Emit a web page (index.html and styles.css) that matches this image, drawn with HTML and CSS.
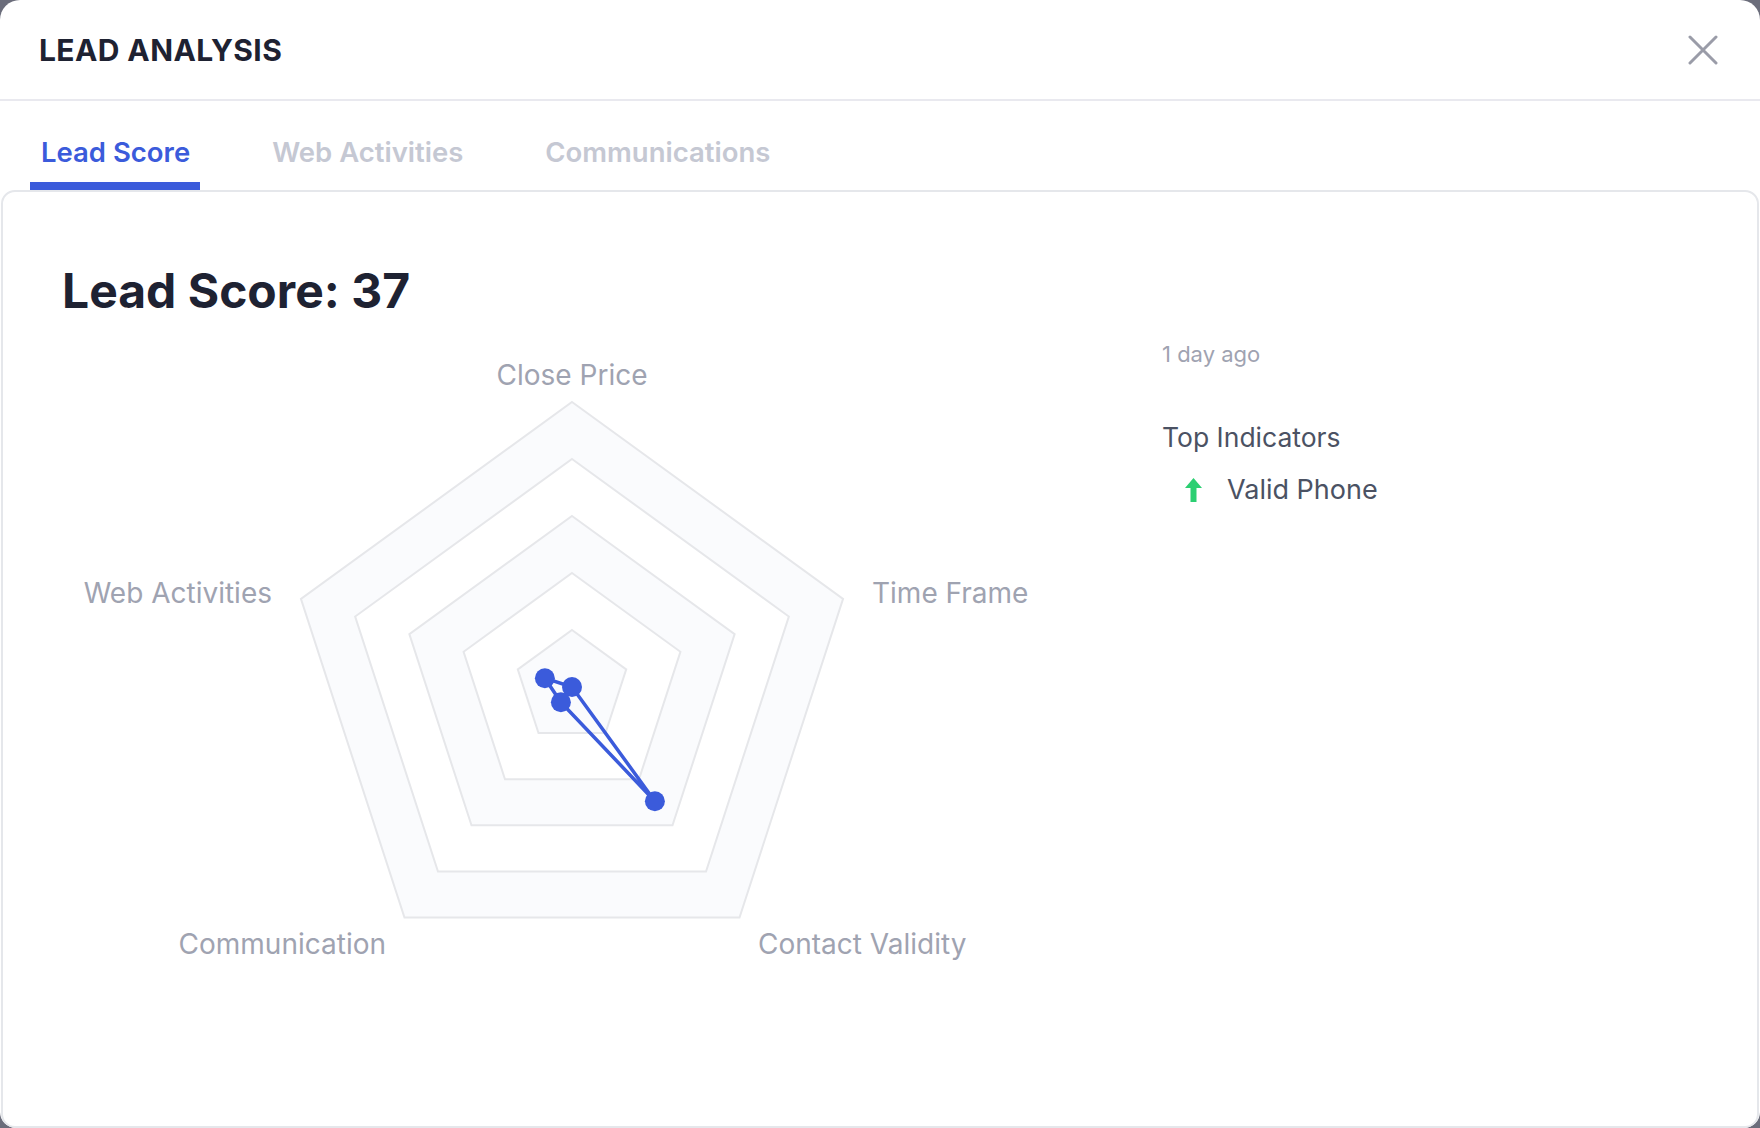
FILE: index.html
```html
<!DOCTYPE html>
<html lang="en">
<head>
  <meta charset="UTF-8" />
  <title>Lead Analysis</title>
  <meta name="viewport" content="width=device-width, initial-scale=1.0" />
  <link rel="stylesheet" href="styles.css">
</head>
<body>
  <div class="modal">
    <header class="modal-header">
      <h1 class="modal-title">LEAD ANALYSIS</h1>
      <button class="close-btn" aria-label="Close">
        <svg width="30" height="30" viewBox="0 0 30 30">
          <path d="M2 2 L28 28 M28 2 L2 28" />
        </svg>
      </button>
    </header>

    <nav class="tabs">
      <a class="tab active">Lead Score</a>
      <a class="tab">Web Activities</a>
      <a class="tab">Communications</a>
    </nav>

    <section class="card">
      <h2 class="score-title">Lead Score: 37</h2>

      <div class="score-body">
        <!-- radar: centre 510,367, radius 285 -->
        <svg class="radar" width="1040" height="660" viewBox="0 0 1040 660">
          <g class="bands">
            <polygon class="band" points="510,82 781.05,278.93 677.52,597.57 342.48,597.57 238.95,278.93" />
            <polygon class="band-gap" points="510,139 726.84,296.54 644.02,551.46 375.98,551.46 293.16,296.54" />
            <polygon class="band" points="510,196 672.63,314.16 610.51,505.34 409.49,505.34 347.37,314.16" />
            <polygon class="band-gap" points="510,253 618.42,331.77 577.01,459.23 442.99,459.23 401.58,331.77" />
            <polygon class="band" points="510,310 564.21,349.39 543.5,413.11 476.5,413.11 455.79,349.39" />
          </g>

          <text class="axis-label" x="510" y="65" text-anchor="middle">Close Price</text>
          <text class="axis-label" x="810" y="283">Time Frame</text>
          <text class="axis-label" x="696" y="634">Contact Validity</text>
          <text class="axis-label" x="324" y="634" text-anchor="end">Communication</text>
          <text class="axis-label" x="210" y="283" text-anchor="end">Web Activities</text>

          <polygon class="series" points="510,367 510,367 592.9,481.2 498.9,382.2 482.9,358.2" />
          <g class="series-dots">
            <circle cx="510" cy="367" r="10" />
            <circle cx="592.9" cy="481.2" r="10" />
            <circle cx="498.9" cy="382.2" r="10" />
            <circle cx="482.9" cy="358.2" r="10" />
          </g>
        </svg>

        <div class="summary">
          <div class="updated">1 day ago</div>
          <div class="indicators-title">Top Indicators</div>
          <ul class="indicators">
            <li>
              <svg class="arrow-up" width="17" height="24" viewBox="0 0 17 24">
                <polygon points="8.5,0 17,10 11.5,10 11.5,24 5.5,24 5.5,10 0,10" />
              </svg>
              Valid Phone
            </li>
          </ul>
        </div>
      </div>
    </section>
  </div>
</body>
</html>
```

FILE: styles.css
```css
html, body {
  margin: 0;
  height: 100%;
}
body {
  background: #6b6d7b;
  font-family: Inter, 'Noto Sans', sans-serif;
  color: #1e2232;
}
.modal {
  height: 100%;
  background: #fff;
  border-radius: 20px 20px 16px 16px;
  overflow: hidden;
  display: flex;
  flex-direction: column;
}
.modal-header {
  height: 99px;
  border-bottom: 2px solid #e9e9ef;
  display: flex;
  align-items: center;
  justify-content: space-between;
  padding: 0 42px 0 39px;
}
.modal-title {
  margin: 0;
  font-size: 30px;
  font-weight: 700;
  letter-spacing: 0.4px;
  color: #1e2232;
}
.close-btn {
  background: none;
  border: 0;
  padding: 0;
  display: flex;
  cursor: pointer;
}
.close-btn path {
  stroke: #9a9ca8;
  stroke-width: 3;
  stroke-linecap: round;
}
.tabs {
  height: 89px;
  display: flex;
  align-items: flex-end;
  gap: 61px;
  padding-left: 30px;
}
.tab {
  padding: 0 10px 13px 11px;
  border-bottom: 8px solid transparent;
  font-size: 27.5px;
  line-height: 34px;
  font-weight: 600;
  color: #c5c8d3;
  cursor: pointer;
}
.tab.active {
  color: #3b5bdb;
  border-bottom-color: #3b5bdb;
}
.card {
  flex: 1;
  margin: 0 1px;
  border: 2px solid #e5e7eb;
  border-radius: 14px;
  padding: 70px 0 0 59px;
}
.score-title {
  margin: 0;
  font-size: 48px;
  line-height: 58px;
  font-weight: 700;
  color: #1e2232;
}
.score-body {
  display: flex;
  gap: 60px;
}
.radar {
  display: block;
  flex-shrink: 0;
}
.band {
  fill: #fafbfd;
  stroke: #e6e7ea;
  stroke-width: 2;
}
.band-gap {
  fill: #fff;
  stroke: #e6e7ea;
  stroke-width: 2;
}
.axis-label {
  font-family: Inter, sans-serif;
  font-size: 28px;
  fill: #9fa3b1;
}
.series {
  fill: none;
  stroke: #3b5bdb;
  stroke-width: 3.5;
  stroke-linejoin: round;
}
.series-dots circle {
  fill: #3b5bdb;
}
.summary {
  padding-top: 18px;
}
.updated {
  font-size: 22px;
  line-height: 32px;
  color: #9fa3b1;
}
.indicators-title {
  margin-top: 49px;
  font-size: 26.5px;
  line-height: 36px;
  color: #4b5263;
}
.indicators {
  list-style: none;
  margin: 17px 0 0;
  padding: 0 0 0 23px;
}
.indicators li {
  display: flex;
  align-items: center;
  gap: 25px;
  font-size: 27px;
  line-height: 36px;
  color: #4b5263;
}
.arrow-up {
  fill: #2ccf72;
}
```
